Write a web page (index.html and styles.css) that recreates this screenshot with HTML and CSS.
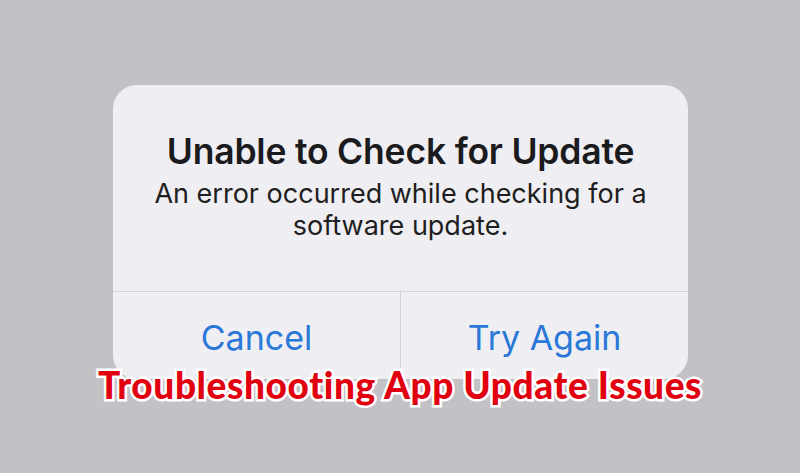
FILE: index.html
```
<!DOCTYPE html>
<html>
<head>
<meta charset="utf-8">
<link rel="stylesheet" href="styles.css">
</head>
<body>
<div class="stage">
  <div class="alert">
    <div class="alert-body">
      <h1 class="alert-title">Unable to Check for Update</h1>
      <p class="alert-msg">An error occurred while checking for a<br>software update.</p>
    </div>
    <div class="alert-actions">
      <div class="btn">Cancel</div>
      <div class="btn">Try Again</div>
    </div>
  </div>
  <div class="caption">Troubleshooting App Update Issues</div>
</div>
</body>
</html>
```
FILE: styles.css
```
html, body {
  margin: 0;
  padding: 0;
}
body {
  width: 800px;
  height: 473px;
  background: #c2c1c6;
  overflow: hidden;
}
.stage {
  position: relative;
  width: 800px;
  height: 473px;
  padding-top: 85px;
  box-sizing: border-box;
}
.alert {
  margin-left: 113px;
  width: 575px;
  height: 294px;
  background: #efeff3;
  border-radius: 24px;
  display: flex;
  flex-direction: column;
  font-family: "Inter", "Liberation Sans", sans-serif;
  overflow: hidden;
}
.alert-body {
  height: 207px;
  box-sizing: border-box;
  padding-top: 46px;
  text-align: center;
  border-bottom: 1px solid #d2d2d6;
}
.alert-title {
  margin: 0;
  font-size: 35.5px;
  font-weight: 600;
  color: #1b1b1d;
  line-height: 42px;
  letter-spacing: -0.2px;
}
.alert-msg {
  margin: 5px 0 0;
  font-size: 27px;
  font-weight: 400;
  color: #1e1e20;
  line-height: 32px;
}
.alert-actions {
  flex: 1;
  display: flex;
}
.btn {
  flex: 1;
  display: flex;
  align-items: center;
  justify-content: center;
  font-size: 34px;
  color: #2a78d8;
  padding-top: 4px;
}
.btn + .btn {
  border-left: 1px solid #d2d2d6;
}
.caption {
  position: absolute;
  left: 0;
  right: 0;
  top: 362px;
  text-align: center;
  font-family: "Lato", "DejaVu Sans", sans-serif;
  font-weight: 900;
  font-size: 37px;
  letter-spacing: 0.6px;
  color: #e1000f;
  -webkit-text-stroke: 5px #ffffff;
  paint-order: stroke fill;
}
```
